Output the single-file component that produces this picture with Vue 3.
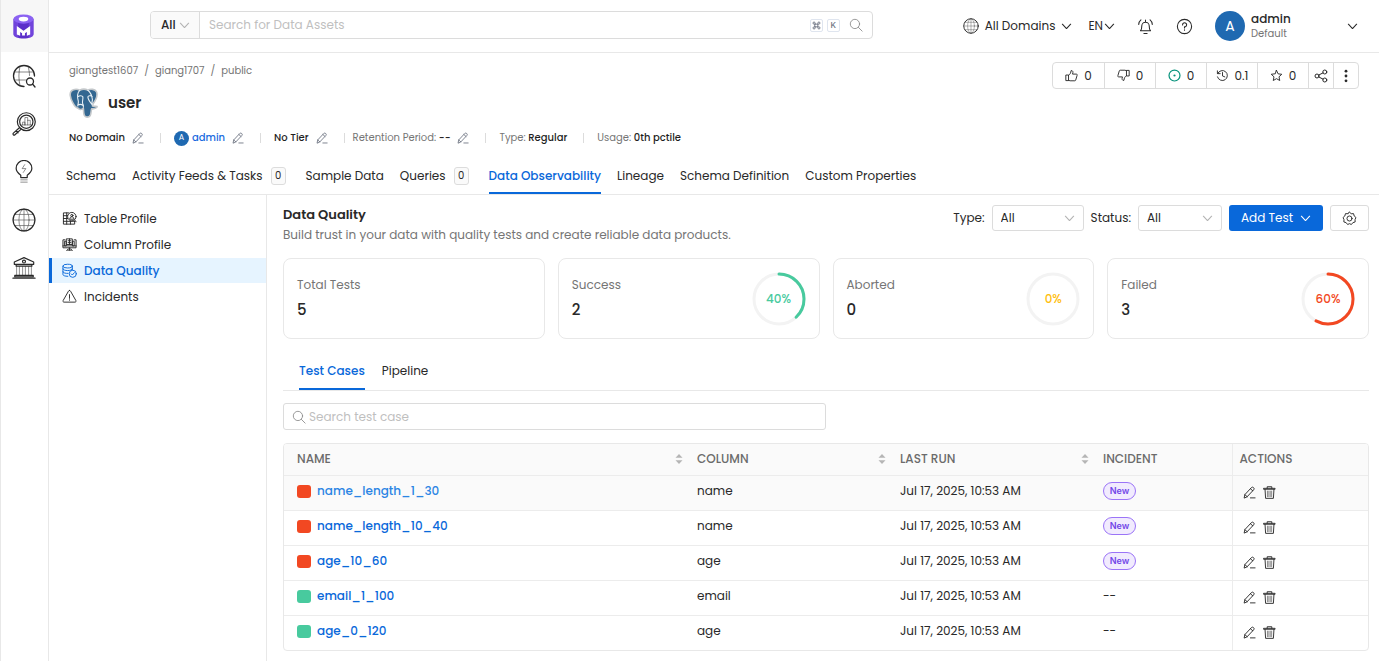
<script setup>
import { ref } from 'vue'

const search = ref('')
const scope = ref('All')
const testSearch = ref('')
const typeFilter = ref('All')
const statusFilter = ref('All')

const rail = [
  { icon: 'explore', label: 'Explore' },
  { icon: 'observability', label: 'Observability' },
  { icon: 'bulb', label: 'Insights' },
  { icon: 'globe', label: 'Domains' },
  { icon: 'govern', label: 'Govern' },
]

const crumbs = ['giangtest1607', 'giang1707', 'public']

const stats = [
  { icon: 'thumb-up', value: '0', label: 'Up votes' },
  { icon: 'thumb-down', value: '0', label: 'Down votes' },
  { icon: 'task', value: '0', label: 'Open tasks' },
  { icon: 'history', value: '0.1', label: 'Version' },
  { icon: 'star', value: '0', label: 'Followers' },
]

const tabs = [
  { label: 'Schema' },
  { label: 'Activity Feeds & Tasks', count: 0 },
  { label: 'Sample Data' },
  { label: 'Queries', count: 0 },
  { label: 'Data Observability', active: true },
  { label: 'Lineage' },
  { label: 'Schema Definition' },
  { label: 'Custom Properties' },
]

const menu = [
  { label: 'Table Profile', icon: 'table-profile' },
  { label: 'Column Profile', icon: 'column-profile' },
  { label: 'Data Quality', icon: 'data-quality', active: true },
  { label: 'Incidents', icon: 'incident' },
]

const cards = [
  { label: 'Total Tests', value: 5 },
  { label: 'Success', value: 2, percent: 40, tone: 'success' },
  { label: 'Aborted', value: 0, percent: 0, tone: 'aborted' },
  { label: 'Failed', value: 3, percent: 60, tone: 'failed' },
]

const rows = [
  { name: 'name_length_1_30', column: 'name', failed: true },
  { name: 'name_length_10_40', column: 'name', failed: true },
  { name: 'age_10_60', column: 'age', failed: true },
  { name: 'email_1_100', column: 'email', failed: false },
  { name: 'age_0_120', column: 'age', failed: false },
]
</script>

<template>
  <svg class="sprite" aria-hidden="true">
    <symbol id="chevron" viewBox="0 0 12 12"><path d="M1.5 3.5 6 8.2l4.500-4.700" /></symbol>
    <symbol id="search" viewBox="0 0 16 16"><circle cx="6.800" cy="6.800" r="5.300" /><path d="m10.700 10.700 4.300 4.300" /></symbol>
    <symbol id="pencil" viewBox="0 0 14 14">
      <path d="M1.300 12.600 2 9.300 9 1.800a1.700 1.700 0 0 1 2.500 2.300L4.500 11.500zM8 2.900l2.500 2.300M2 9.300l2.500 2.200M8 12.800h5" />
    </symbol>
    <symbol id="trash" viewBox="0 0 14 14">
      <path d="M1 3.500h12v-1H1zM4.500 2.500V.8h5v1.700M2.200 3.800l.6 9.500h8.400l.6-9.500" /><path class="fine" d="M4.800 5.500v6M6.300 5.500v6M7.800 5.500v6M9.300 5.500v6" />
    </symbol>
    <symbol id="globe" viewBox="0 0 26 26">
      <circle cx="13" cy="13" r="11.800" />
      <g class="fine"><ellipse cx="13" cy="13" rx="5.500" ry="11.800" /><path d="M13 1v24M1 13h24M3 7h20M3 19h20" /></g>
    </symbol>
    <symbol id="explore" viewBox="0 0 24 24">
      <path d="M12 22.500A10.500 10.500 0 1 1 22.500 12" />
      <path class="fine" d="M2.500 8h19M2.500 16h11M8 2.500c-1.500 6-1.500 13 0 19M16 2.500c1 3 1.500 6 1.500 9" />
      <circle cx="18" cy="17.500" r="3.500" /><path d="m20.500 20 2.500 3" />
    </symbol>
    <symbol id="observability" viewBox="0 0 26 26">
      <circle cx="15.500" cy="10.500" r="9.700" /><circle cx="15.500" cy="10.500" r="7.200" />
      <path d="m8.300 16.800-6.800 6.100c-1.200 1.200.5 2.800 1.700 1.700L10 18.500M4.500 20.500l2 2" />
      <path class="fine" d="M10.500 14h10M11.500 14v-3h2.500v3M14 14V6h3v8M17 9h2.800v5" />
    </symbol>
    <symbol id="bulb" viewBox="0 0 22 26">
      <path d="M7.500 19v-2.500C4 14 2.500 12 2.500 9a8.500 8.500 0 0 1 17 0c0 3-1.500 5-5 7.500V19z" />
      <path class="fine" d="M7.500 21.500h7M7.500 24h7M11.800 5 9 9.300h4L10.200 13.500" />
    </symbol>
    <symbol id="govern" viewBox="0 0 26 26">
      <path d="M2.500 9V6.500L13 1.800l10.500 4.700V9zM3 21h20v1.500H3zM1 24h24M4.500 9v2h17V9" /><circle cx="13" cy="6" r="1.600" />
      <path class="fine" d="M5 11.500V21M8 11.500V21M11.500 11.500V21M14.500 11.500V21M18 11.500V21M21 11.500V21" />
    </symbol>
    <symbol id="bell" viewBox="0 0 16 16">
      <path d="M3.300 12c1-1 1.200-2 1.200-4.500a3.500 3.500 0 0 1 7 0c0 2.500.2 3.500 1.200 4.500zM6.500 14.500h3M8 4V2M3.700 1.800A6 6 0 0 0 1.600 6M12.300 1.800A6 6 0 0 1 14.400 6" />
    </symbol>
    <symbol id="help" viewBox="0 0 16 16">
      <circle cx="8" cy="8" r="6.700" /><path d="M6.200 6.500A1.900 1.900 0 1 1 8 8.300v1M8 11v.5" />
    </symbol>
    <symbol id="thumb-up" viewBox="0 0 14 14">
      <path d="M1.300 6.500h2.500v6H1.300zM3.800 6.800c2-1 2.500-3 2.700-5 2-.5 2.500 1.500 1.600 3.700h4.200c.8 0 1 .8.700 1.500l-1.500 5c-.2.500-.5.700-1 .7H5.500l-1.700-.5" />
    </symbol>
    <symbol id="thumb-down" viewBox="0 0 14 14">
      <path d="M12.700 7.500h-2.500v-6h2.500zM10.200 7.200c-2 1-2.500 3-2.700 5-2 .5-2.500-1.500-1.600-3.700H1.700c-.8 0-1-.8-.7-1.500l1.500-5c.2-.5.500-.7 1-.7h5l1.700.5" />
    </symbol>
    <symbol id="task" viewBox="0 0 14 14"><circle cx="7" cy="7" r="5.900" /><circle class="solid" cx="7" cy="7" r="1.200" /></symbol>
    <symbol id="history" viewBox="0 0 14 14"><path d="M1.500 2v3h3M1.800 5A5.400 5.400 0 1 1 1.600 8.500M7 3.800V7.500l2.500 1" /></symbol>
    <symbol id="star" viewBox="0 0 14 14"><path d="m7 1.500 1.700 3.700 4 .5-3 2.700.8 4L7 10.400l-3.500 2 .8-4-3-2.700 4-.5z" /></symbol>
    <symbol id="share" viewBox="0 0 14 14">
      <circle cx="3" cy="7" r="2" /><circle cx="10.800" cy="3" r="2" /><circle cx="10.800" cy="11" r="2" /><path d="m4.800 6 4.200-2.100M4.800 8 9 10.100" />
    </symbol>
    <symbol id="more" viewBox="0 0 14 14"><g class="solid"><circle cx="7" cy="2.200" r="1.400" /><circle cx="7" cy="7" r="1.400" /><circle cx="7" cy="11.800" r="1.400" /></g></symbol>
    <symbol id="gear" viewBox="0 0 16 16">
      <path d="M8 1.200 9.800 2.900 12.300 2.800 13 5.300 14.900 7 13.900 9.200 14 11.700 11.600 12.400 10 14.400 8 13.500 6 14.400 4.400 12.400 2 11.700 2.100 9.200 1.100 7 3 5.300 3.700 2.800 6.200 2.900z" /><circle cx="8" cy="8" r="2.700" />
    </symbol>
    <symbol id="command" viewBox="0 0 10 10"><path d="M3.500 3.500h3v3h-3zM3.500 3.500H2.300a1.200 1.200 0 1 1 1.200-1.200zM6.500 3.500V2.300a1.200 1.200 0 1 1 1.200 1.200zM6.500 6.500h1.200a1.200 1.200 0 1 1-1.200 1.200zM3.500 6.500v1.200a1.200 1.200 0 1 1-1.200-1.200z" /></symbol>
    <symbol id="table-profile" viewBox="0 0 16 16">
      <path d="M7 2H1.500v12h12v-3M1.500 5H6M1.500 8H6M1.500 11h12M5 2v12M9 11v3" /><circle cx="10.500" cy="6" r="4.500" /><circle cx="10.500" cy="4.800" r="1.200" /><path d="M8.300 8.300c0-3 4.400-3 4.400 0zM13.500 9.500l1.500 2" />
    </symbol>
    <symbol id="column-profile" viewBox="0 0 16 16">
      <path d="M3 3H1v8.500h14V3h-2M1 9.500h14M8 11.500V14M6 14h4M3 4.500h1.500v5H3zM11.500 4.500H13v5h-1.500zM5 2h6v6H5zM6.500 4h3M6.500 6h3M8 2v6M5 14.500l2-2M11 14.500l-2-2" />
    </symbol>
    <symbol id="data-quality" viewBox="0 0 16 16">
      <ellipse cx="6" cy="3.300" rx="5" ry="2" /><path d="M1 3.300v9c0 1 2 1.900 5.200 1.900M11 3.300v4M1 6.300c0 2.500 10 2.500 10 0M1 9.300c0 1.300 3 2 5.500 1.800" /><circle cx="11.500" cy="11.500" r="3.800" /><path d="m9.800 11.600 1.200 1.200 2.200-2.500" />
    </symbol>
    <symbol id="incident" viewBox="0 0 16 16">
      <path d="M8 1.500c.5 0 .8.300 1.100.8l5.700 10c.5.900 0 1.700-1 1.700H2.200c-1 0-1.500-.8-1-1.700l5.700-10c.3-.5.600-.8 1.100-.8zM8 6v4M8 11.500v.5" />
    </symbol>
  </svg>

  <div class="app">
    <aside class="rail">
      <a class="logo" href="#" aria-label="Home">
        <svg width="21" height="25" viewBox="0 0 22 26">
          <path fill="#5b2fc9" d="M.5 5v16c0 2.500 4.700 4.500 10.500 4.500s10.500-2 10.500-4.500V5z" />
          <path fill="#8054ea" d="M.5 5v16c0 2 2 3.200 5 4V9zM21.500 5v16c0 2-2 3.200-5 4V9z" opacity=".6" />
          <ellipse cx="11" cy="5.200" rx="10.500" ry="4.800" fill="#8b62f2" />
          <ellipse cx="11" cy="5.200" rx="5" ry="2.500" fill="#fff" />
          <path fill="#fff" d="M4 12.500 11 17.500 18 12.500v9l-3.500 1.200v-4L12.500 20v2.500h-3V20l-2-1.300v4L4 21.500z" />
        </svg>
      </a>
      <nav class="rail-nav" aria-label="Main">
        <a v-for="item in rail" :key="item.icon" href="#" :aria-label="item.label">
          <svg class="icon"><use :href="'#' + item.icon" /></svg>
        </a>
      </nav>
    </aside>

    <div class="page">
      <header class="topbar">
        <form class="global-search" @submit.prevent>
          <div class="scope">
            <select v-model="scope" aria-label="Search scope"><option>All</option></select>
            <svg class="icon tiny pale"><use href="#chevron" /></svg>
          </div>
          <input v-model="search" type="text" aria-label="Search for Data Assets" placeholder="Search for Data Assets" />
          <kbd><svg class="icon"><use href="#command" /></svg></kbd>
          <kbd>K</kbd>
          <button class="plain find" aria-label="Search"><svg class="icon"><use href="#search" /></svg></button>
        </form>
        <div class="top-actions">
          <button class="plain domains"><svg class="icon"><use href="#globe" /></svg><span>All Domains</span><svg class="icon tiny"><use href="#chevron" /></svg></button>
          <button class="plain lang">EN<svg class="icon tiny"><use href="#chevron" /></svg></button>
          <button class="plain round" aria-label="Notifications"><svg class="icon"><use href="#bell" /></svg></button>
          <button class="plain round" aria-label="Help"><svg class="icon"><use href="#help" /></svg></button>
          <button class="plain profile">
            <span class="avatar">A</span>
            <span class="who"><b>admin</b><small>Default</small></span>
            <svg class="icon tiny"><use href="#chevron" /></svg>
          </button>
        </div>
      </header>

      <section class="entity">
        <div class="entity-info">
          <nav class="crumbs" aria-label="Breadcrumb">
            <template v-for="(crumb, i) in crumbs" :key="crumb"><span v-if="i">/</span><a href="#">{{ crumb }}</a></template>
          </nav>
          <div class="title">
            <svg width="30" height="30" viewBox="0 0 30 30">
              <path fill="#336791" stroke="#c3c7ca" stroke-width="1.600" d="M4.500 1.800C7 .7 9 1.300 10.700 2.300 13 1 16.500 1 18.700 2c3-1.300 7.500-1 8.800 1.800 1.500 3.500-1 8.700-3.600 12.200l-.3 2c1.500.6 3.300-.2 4.400.4.500.6-1.400 2.700-5.200 2.400-1 1.500-.5 4.700-1.500 6.700-1.500 2.300-5 2.200-6-.2-1-2-.5-5-1-7-2 2.200-4.500 1-5.500-.2C5.500 19.800 1.500 11 1.200 7.300 1 4.500 2 2.700 4.500 1.800z" />
              <path fill="none" stroke="#e8f0f5" stroke-width="1.100" stroke-linecap="round" d="M10.700 2.300C8 5 8.500 10 9.300 13c.4 2-.6 3.500-.5 5M18.700 2c3 2.500 4.300 6 4.700 9.500.2 1.800-1 2.200-.2 4.500M9.200 8.500c1.500-1.200 4-1 4.600.2.500 2-.5 4-.3 6 .2 1.800 1.500 2.500.8 4.300M23.200 8.500c-1.300-1.200-4-.8-4.300.4 0 2.600 2.600 5.600 4.300 8.100M8.800 17c1.700-.7 3.500-1 5 .3" />
            </svg>
            <h1>user</h1>
          </div>
          <div class="meta">
            <div><b>No Domain</b><button class="plain" aria-label="Edit domain"><svg class="icon"><use href="#pencil" /></svg></button></div>
            <div><span class="avatar small">A</span><a href="#">admin</a><button class="plain" aria-label="Edit owner"><svg class="icon"><use href="#pencil" /></svg></button></div>
            <div class="tight"><b>No Tier</b><button class="plain" aria-label="Edit tier"><svg class="icon"><use href="#pencil" /></svg></button></div>
            <div><span>Retention Period: <b>--</b></span><button class="plain" aria-label="Edit retention period"><svg class="icon"><use href="#pencil" /></svg></button></div>
            <div><span>Type: <b>Regular</b></span></div>
            <div><span>Usage: <b>0th pctile</b></span></div>
          </div>
        </div>
        <div class="stat-group">
          <button v-for="stat in stats" :key="stat.icon" class="stat" :aria-label="stat.label + ' ' + stat.value">
            <svg class="icon" :class="{ teal: stat.icon === 'task' }"><use :href="'#' + stat.icon" /></svg>{{ stat.value }}
          </button>
          <button class="slim" aria-label="Share"><svg class="icon"><use href="#share" /></svg></button>
          <button class="slim" aria-label="More"><svg class="icon"><use href="#more" /></svg></button>
        </div>
      </section>

      <nav class="tabs" aria-label="Table details">
        <a v-for="tab in tabs" :key="tab.label" href="#" :class="{ active: tab.active }">
          {{ tab.label }}<span v-if="tab.count !== undefined" class="count">{{ tab.count }}</span>
        </a>
      </nav>

      <div class="body">
        <nav class="menu" aria-label="Data observability">
          <a v-for="item in menu" :key="item.label" href="#" :class="{ active: item.active }">
            <svg class="icon"><use :href="'#' + item.icon" /></svg>{{ item.label }}
          </a>
        </nav>

        <main>
          <div class="heading">
            <div>
              <h2>Data Quality</h2>
              <p>Build trust in your data with quality tests and create reliable data products.</p>
            </div>
            <div class="controls">
              <label for="type">Type:</label>
              <div class="select type">
                <select id="type" v-model="typeFilter"><option>All</option></select>
                <svg class="icon tiny pale"><use href="#chevron" /></svg>
              </div>
              <label for="status">Status:</label>
              <div class="select status">
                <select id="status" v-model="statusFilter"><option>All</option></select>
                <svg class="icon tiny pale"><use href="#chevron" /></svg>
              </div>
              <button class="primary">Add Test<svg class="icon tiny"><use href="#chevron" /></svg></button>
              <button class="settings" aria-label="Settings"><svg class="icon"><use href="#gear" /></svg></button>
            </div>
          </div>

          <div class="cards">
            <article v-for="card in cards" :key="card.label" class="card">
              <div><p>{{ card.label }}</p><strong>{{ card.value }}</strong></div>
              <div v-if="card.tone" class="ring" :class="card.tone">
                <svg viewBox="0 0 54 54">
                  <circle cx="27" cy="27" r="25" />
                  <circle v-if="card.percent" class="arc" cx="27" cy="27" r="25" pathLength="100" :stroke-dasharray="card.percent - 2 + ' 100'" />
                </svg>
                <span>{{ card.percent }}%</span>
              </div>
            </article>
          </div>

          <nav class="subtabs" aria-label="Test views">
            <a href="#" class="active">Test Cases</a>
            <a href="#">Pipeline</a>
          </nav>

          <div class="test-search">
            <svg class="icon"><use href="#search" /></svg>
            <input v-model="testSearch" type="text" aria-label="Search test case" placeholder="Search test case" />
          </div>

          <div class="table-wrap">
            <table>
              <colgroup><col /><col class="c-mid" /><col class="c-mid" /><col class="c-incident" /><col class="c-actions" /></colgroup>
              <thead>
                <tr>
                  <th v-for="head in ['NAME', 'COLUMN', 'LAST RUN']" :key="head" scope="col">
                    <span class="sortable">{{ head }}<svg width="8" height="12" viewBox="0 0 8 12"><path fill="#b5b5b5" d="m4 1 3.500 3.800h-7zM4 11 .5 7.200h7z" /></svg></span>
                  </th>
                  <th scope="col">INCIDENT</th>
                  <th scope="col">ACTIONS</th>
                </tr>
              </thead>
              <tbody>
                <tr v-for="(row, i) in rows" :key="row.name" :class="{ hover: i === 0 }">
                  <td><div class="name"><i :class="{ failed: row.failed }"></i><a href="#">{{ row.name }}</a></div></td>
                  <td>{{ row.column }}</td>
                  <td>Jul 17, 2025, 10:53 AM</td>
                  <td><span v-if="row.failed" class="badge">New</span><template v-else>--</template></td>
                  <td>
                    <div class="row-actions">
                      <button class="plain" :aria-label="'Edit ' + row.name"><svg class="icon"><use href="#pencil" /></svg></button>
                      <button class="plain" :aria-label="'Delete ' + row.name"><svg class="icon"><use href="#trash" /></svg></button>
                    </div>
                  </td>
                </tr>
              </tbody>
            </table>
          </div>
        </main>
      </div>
    </div>
  </div>
</template>

<style>
body { margin: 0; background: #fff; }
.fine { stroke-width: 0.7; opacity: 0.8; }
.solid { fill: currentColor; stroke: none; }
</style>

<style scoped>
* { box-sizing: border-box; }
.sprite { position: absolute; width: 0; height: 0; }
.app {
  display: flex;
  min-height: 100vh;
  font-family: Poppins, Inter, "Open Sans", sans-serif;
  font-size: 12px;
  line-height: 20px;
  color: #292929;
}
a { color: inherit; text-decoration: none; }
h1, h2, p { margin: 0; }
b { font-weight: 500; }
button, input, select { font: inherit; color: inherit; margin: 0; }
button { cursor: pointer; }
.plain { display: flex; align-items: center; padding: 0; border: 0; background: none; }
.icon { display: block; flex: none; width: 14px; height: 14px; fill: none; stroke: currentColor; stroke-width: 1; stroke-linecap: round; stroke-linejoin: round; }
.tiny { width: 11px; height: 11px; stroke-width: 1.2; }
.pale { color: #b3b3b3; }
.teal { color: #07937c; stroke-width: 1.3; }

.rail { flex: none; width: 49px; border-left: 1px solid #e8e8e8; border-right: 1px solid #e8e8e8; }
.logo { display: flex; align-items: center; justify-content: center; height: 52px; padding-right: 3px; background: #f7f7f7; }
.rail-nav { display: flex; flex-direction: column; }
.rail-nav a { display: flex; align-items: center; justify-content: center; height: 48px; padding-right: 1px; }
.rail-nav .icon { width: 24px; height: 24px; stroke-width: 1.3; }

.page { flex: 1; min-width: 0; display: flex; flex-direction: column; }
.topbar { display: flex; align-items: center; justify-content: space-between; height: 53px; padding: 0 21px 2px 101px; border-bottom: 1px solid #e8e8e8; }
.global-search { flex: 1; display: flex; align-items: center; height: 28px; margin-right: 90px; border: 1px solid #dcdcdc; border-radius: 4px; }
.scope { position: relative; width: 49px; height: 100%; border-right: 1px solid #dcdcdc; border-radius: 3px 0 0 3px; background: #fafafa; }
.scope select { font-weight: 500; padding: 0 0 0 10px; }
.scope .icon { position: absolute; right: 9px; top: 8px; pointer-events: none; }
select { width: 100%; height: 100%; border: 0; background: none; appearance: none; outline: 0; }
input { flex: 1; min-width: 0; height: 100%; border: 0; padding: 0; background: none; outline: 0; }
input::placeholder { color: #bfbfbf; opacity: 1; }
.global-search input { padding-left: 9px; }
kbd { display: flex; align-items: center; justify-content: center; width: 13px; height: 13px; margin-right: 4px; border: 1px solid #dfe5ef; border-radius: 2px; font: 500 8px/10px Inter, sans-serif; color: #6b7280; }
kbd .icon { width: 9px; height: 9px; }
.find { margin: 0 9px 0 5px; color: #8c8c8c; }
.top-actions { display: flex; align-items: center; margin-top: 2px; }
.domains { gap: 6px; margin-right: 16px; }
.domains .icon:first-child { width: 16px; height: 16px; stroke-width: 1.5; }
.lang { gap: 1px; margin-right: 22px; }
.round { margin-right: 22px; }
.round .icon { width: 17px; height: 17px; }
.avatar { display: flex; align-items: center; justify-content: center; width: 30px; height: 30px; border-radius: 50%; background: #1f69b1; color: #fff; font-size: 14px; }
.avatar.small { width: 15px; height: 15px; font-size: 8px; }
.profile .who { width: 96px; margin-left: 6px; text-align: left; }
.who b, .who small { display: block; line-height: 15px; }
.who small { font-size: 10px; color: #757575; }

.entity { display: flex; justify-content: space-between; align-items: flex-start; padding: 9px 20px 0 20px; }
.crumbs { display: flex; gap: 6px; padding-top: 1px; font-size: 10px; line-height: 16px; color: #757575; }
.title { display: flex; align-items: center; gap: 9px; height: 30px; margin: 9px 0 10px; }
h1 { font-size: 15px; font-weight: 600; line-height: 24px; }
.meta { display: flex; font-size: 10px; color: #757575; }
.meta > div { position: relative; display: flex; align-items: center; padding-right: 17px; margin-right: 13px; }
.meta > div:not(:last-child)::after { content: ""; position: absolute; right: 0; width: 1px; height: 10px; background: #dcdcdc; }
.meta > .tight { margin-right: 8px; }
.meta b { color: #1f1f1f; }
.meta a { margin-left: 3px; color: #1a6ae0; font-weight: 500; }
.meta button { margin-left: 7px; color: #6b7280; }
.meta button .icon { width: 12px; height: 12px; }
.stat-group { display: flex; height: 27px; border: 1px solid #dcdcdc; border-radius: 4px; }
.stat-group button { display: flex; align-items: center; justify-content: center; padding: 0; border: 0; border-left: 1px solid #dcdcdc; background: none; }
.stat-group button:first-child { border-left: 0; }
.stat-group .stat { width: 51px; gap: 6px; }
.stat-group .slim { width: 25px; }
.stat .icon { width: 13px; height: 13px; }

.tabs { display: flex; gap: 16px; height: 38px; margin-top: 9px; padding-left: 17px; border-bottom: 1px solid #e8e8e8; }
.tabs a { display: flex; align-items: center; padding-top: 2px; border-bottom: 2px solid transparent; white-space: nowrap; }
.tabs a.active, .subtabs a.active { color: #0968da; border-color: #0968da; font-weight: 500; }
.count { margin: 0 4px 0 8px; width: 15px; height: 18px; border: 1px solid #dcdcdc; border-radius: 3px; background: #fafafa; font-size: 10px; line-height: 16px; text-align: center; }

.body { flex: 1; display: flex; }
.menu { flex: none; display: flex; flex-direction: column; gap: 1px; width: 218px; padding-top: 11px; border-right: 1px solid #e8e8e8; }
.menu a { display: flex; align-items: center; gap: 7px; height: 25px; padding-left: 10px; border-left: 3px solid transparent; }
.menu a.active { border-color: #0968da; background: #e6f4ff; color: #0968da; font-weight: 500; }
.menu .icon { width: 15px; height: 15px; }

main { flex: 1; min-width: 0; padding: 10px 10px 10px 16px; }
.heading { display: flex; justify-content: space-between; align-items: flex-start; }
h2 { font-size: 13px; font-weight: 600; line-height: 20px; }
.heading p { color: #757575; }
.controls { display: flex; align-items: center; gap: 7px; }
.select { position: relative; height: 26px; border: 1px solid #dcdcdc; border-radius: 3px; }
.select select { padding: 0 0 0 8px; }
.select .icon { position: absolute; right: 8px; top: 7px; pointer-events: none; }
.type { width: 92px; }
.status { width: 84px; }
.primary { display: flex; align-items: center; justify-content: center; gap: 7px; width: 94px; height: 26px; padding: 0; border: 0; border-radius: 3px; background: #0968da; color: #fff; }
.settings { display: flex; align-items: center; justify-content: center; width: 39px; height: 26px; padding: 0; border: 1px solid #dcdcdc; border-radius: 3px; background: #fff; }
.settings .icon { width: 15px; height: 15px; }

.cards { display: grid; grid-template-columns: repeat(4, 1fr); gap: 13px; margin-top: 13px; }
.card { display: flex; align-items: center; justify-content: space-between; height: 81px; padding: 0 13px; border: 1px solid #e8e8e8; border-radius: 8px; }
.card p { line-height: 20px; color: #757575; }
.card strong { display: block; margin-top: 3px; font-size: 15px; font-weight: 500; line-height: 24px; }
.ring { display: grid; place-items: center; width: 54px; height: 54px; }
.ring > * { grid-area: 1 / 1; }
.ring circle { fill: none; stroke: #f3f3f3; stroke-width: 3; }
.ring .arc { stroke: currentColor; stroke-linecap: round; transform: rotate(-90deg); transform-origin: center; }
.ring span { font-weight: 500; }
.success { color: #48ca9e; }
.aborted { color: #ffbe0e; }
.failed { color: #f24822; }

.subtabs { display: flex; gap: 17px; height: 39px; margin-top: 13px; padding-left: 16px; border-bottom: 1px solid #e8e8e8; }
.subtabs a { display: flex; align-items: center; padding-top: 2px; border-bottom: 2px solid transparent; }
.test-search { display: flex; align-items: center; gap: 3px; width: 50%; height: 27px; margin: 12px 0 13px; padding: 0 8px; border: 1px solid #dcdcdc; border-radius: 3px; }
.test-search .icon { color: #8c8c8c; }
.table-wrap { border: 1px solid #e8e8e8; border-radius: 4px; overflow: hidden; }
table { width: 100%; border-collapse: collapse; table-layout: fixed; }
.c-mid { width: 203px; }
.c-incident { width: 143px; }
.c-actions { width: 136px; }
th, td { padding: 0 14px; text-align: left; border-top: 1px solid #ececec; }
th:first-child, td:first-child { padding-left: 13px; }
th { height: 31px; border-top: 0; background: #fafafa; color: #6b6b6b; font-weight: 500; }
th:nth-child(-n + 3) { padding-right: 0; }
.sortable { display: flex; align-items: center; justify-content: space-between; }
td { height: 35px; padding-bottom: 3px; }
.hover td { background: #fafafa; }
th:last-child, td:last-child { border-left: 1px solid #ececec; padding-left: 7px; }
td:last-child { padding-bottom: 1px; }
.name { display: flex; align-items: center; gap: 6px; }
.name i { width: 14px; height: 13px; border-radius: 3px; background: #48ca9e; }
.name i.failed { background: #f24822; }
.name a { color: #0968da; font-weight: 500; }
.hover .name a { color: #2b85e4; }
.badge { display: block; width: 33px; height: 18px; border: 1px solid #9b74f7; border-radius: 9px; background: #f1ebfe; color: #7147e8; font-family: Inter, sans-serif; font-size: 9px; font-weight: 600; line-height: 16px; text-align: center; }
.row-actions { display: flex; gap: 7px; padding-left: 3px; }
.row-actions .icon { width: 13px; height: 13px; }
</style>
